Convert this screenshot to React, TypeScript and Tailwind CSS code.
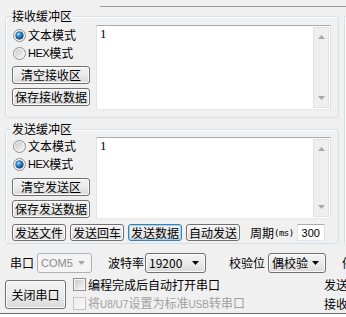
import React from 'react';

const Radio: React.FC<{ checked?: boolean; id: string }> = ({ checked, id }) => (
  <svg width="13" height="13" viewBox="0 0 13 13" className="shrink-0">
    <defs>
      <linearGradient id={`rb-${id}`} x1="0" y1="0" x2="1" y2="1">
        <stop offset="0" stopColor="#c9c9c9" />
        <stop offset="1" stopColor="#f8f8f8" />
      </linearGradient>
      <radialGradient id={`rd-${id}`} cx="0.35" cy="0.3" r="0.75">
        <stop offset="0" stopColor="#a9e0ff" />
        <stop offset="0.45" stopColor="#2b8bd6" />
        <stop offset="1" stopColor="#0b3f78" />
      </radialGradient>
    </defs>
    <circle cx="6.5" cy="6.5" r="6" fill="#f4f4f4" stroke="#8e8f8f" />
    <circle cx="6.5" cy="6.5" r="4.5" fill={`url(#rb-${id})`} />
    {checked && <circle cx="6.5" cy="6.5" r="3.8" fill={`url(#rd-${id})`} stroke="#14467a" strokeWidth="0.6" />}
  </svg>
);

const Check: React.FC<{ disabled?: boolean }> = ({ disabled }) => (
  <svg width="13" height="13" viewBox="0 0 13 13" className="shrink-0">
    <defs>
      <linearGradient id={disabled ? 'cbd' : 'cbe'} x1="0" y1="0" x2="1" y2="1">
        <stop offset="0" stopColor={disabled ? '#ececec' : '#cbcbcb'} />
        <stop offset="1" stopColor={disabled ? '#f8f8f8' : '#f6f6f6'} />
      </linearGradient>
    </defs>
    <rect x="0.5" y="0.5" width="12" height="12" fill="#f4f4f4" stroke={disabled ? '#c4c4c4' : '#8e8f8f'} />
    <rect x="2" y="2" width="9" height="9" fill={`url(#${disabled ? 'cbd' : 'cbe'})`} />
  </svg>
);

const Btn: React.FC<{ children: React.ReactNode; className?: string; focused?: boolean }> = ({
  children,
  className = '',
  focused = false,
}) => (
  <div
    className={`flex shrink-0 items-center justify-center rounded-[3px] border bg-gradient-to-b from-[#f3f3f3] via-[#ebebeb] to-[#d9d9d9] leading-[14px] ${
      focused
        ? 'border-[#3c7fb1] shadow-[inset_0_0_0_1px_#9fd4f3]'
        : 'border-[#707070] shadow-[inset_0_0_0_1px_#fbfbfb]'
    } ${className}`}
  >
    {children}
  </div>
);

const Combo: React.FC<{ text: string; className: string; disabled?: boolean }> = ({
  text,
  className,
  disabled,
}) => (
  <div
    className={`flex h-[20px] shrink-0 items-center justify-between rounded-[3px] border pl-[3px] pr-[6px] ${
      disabled
        ? 'border-[#adb2b5] bg-[#f4f4f4] text-[#8a8a8a]'
        : 'border-[#707070] bg-gradient-to-b from-[#f3f3f3] via-[#ebebeb] to-[#d9d9d9] shadow-[inset_0_0_0_1px_#fbfbfb]'
    } ${className}`}
  >
    <span className={disabled ? "font-['Liberation_Sans',sans-serif] text-[11px]" : ''}>{text}</span>
    <svg width="7" height="4" viewBox="0 0 7 4">
      <path d="M0 0h7L3.5 4z" fill={disabled ? '#a6a6a6' : '#000'} />
    </svg>
  </div>
);

const Memo: React.FC<{ className: string }> = ({ className }) => (
  <div className={`flex shrink-0 border border-[#abadb3] border-r-[#dbdfe6] border-b-[#e3e9ef] border-l-[#e2e3ea] bg-white ${className}`}>
    <div className="flex-1 pl-[3px] pt-[1px] font-['Liberation_Serif',serif] text-[13px] leading-[14px]">1</div>
    <div className="my-[1px] mr-[1px] flex w-[16px] flex-col items-center justify-between border border-[#e2e2e2] bg-[#efefef] py-[7px]">
      <svg width="7" height="4" viewBox="0 0 7 4">
        <path d="M0 4h7L3.5 0z" fill="#a8a8a8" />
      </svg>
      <svg width="7" height="4" viewBox="0 0 7 4">
        <path d="M0 0h7L3.5 4z" fill="#a8a8a8" />
      </svg>
    </div>
  </div>
);

const GroupBox: React.FC<{ label: string; className: string; children: React.ReactNode }> = ({
  label,
  className,
  children,
}) => (
  <div className={`relative rounded-[3px] border border-[#d5dfe5] shadow-[inset_1px_1px_0_#ffffff] ${className}`}>
    <span className="absolute -top-[8px] left-[5px] bg-[#f0f0f0] px-[1px] leading-[14px]">{label}</span>
    {children}
  </div>
);

const App: React.FC = () => {
  return (
    <div className="flex h-[317px] w-[346px] flex-col overflow-hidden bg-[#f0f0f0] font-['Noto_Sans_CJK_SC',sans-serif] text-[12px] leading-[14px] text-black">
      <div className="h-[16px] shrink-0">
        <div className="h-[6px]" />
        <div className="ml-[100px] h-px bg-[#9a9a9a]" />
      </div>

      <div className="flex h-[228px] shrink-0">
        <div className="ml-[5px] flex w-[334px] shrink-0 flex-col">
          <GroupBox label="接收缓冲区" className="h-[102px] px-[6px] pt-[8px] pb-[7px]">
            <div className="flex h-[85px]">
              <div className="flex w-[78px] shrink-0 flex-col">
                <div className="mt-[1px] flex h-[18px] items-center gap-[2px] pl-[1px]">
                  <Radio checked id="r1" />
                  <span>文本模式</span>
                </div>
                <div className="flex h-[18px] items-center gap-[2px] pl-[1px]">
                  <Radio id="r2" />
                  <span className="font-['Liberation_Sans',sans-serif] text-[11px] tracking-[-0.5px]">HEX</span>
                  <span className="-ml-[2px]">模式</span>
                </div>
                <Btn className="mt-[4px] h-[18px]">清空接收区</Btn>
                <Btn className="mt-[4px] h-[18px]">保存接收数据</Btn>
              </div>
              <Memo className="ml-[6px] h-[85px] w-[235px]" />
            </div>
          </GroupBox>

          <GroupBox label="发送缓冲区" className="mt-[11px] h-[115px] px-[6px] pt-[7px] pb-[2px]">
            <div className="flex h-[82px]">
              <div className="flex w-[78px] shrink-0 flex-col">
                <div className="flex h-[18px] items-center gap-[2px] pl-[1px]">
                  <Radio id="r3" />
                  <span>文本模式</span>
                </div>
                <div className="flex h-[18px] items-center gap-[2px] pl-[1px]">
                  <Radio checked id="r4" />
                  <span className="font-['Liberation_Sans',sans-serif] text-[11px] tracking-[-0.5px]">HEX</span>
                  <span className="-ml-[2px]">模式</span>
                </div>
                <Btn className="mt-[5px] h-[18px]">清空发送区</Btn>
                <Btn className="mt-[4px] h-[18px]">保存发送数据</Btn>
              </div>
              <Memo className="ml-[6px] h-[82px] w-[235px]" />
            </div>
            <div className="mt-[5px] flex h-[17px] items-center whitespace-nowrap">
              <Btn className="h-[17px] w-[54px]">发送文件</Btn>
              <Btn className="ml-[4px] h-[17px] w-[54px]">发送回车</Btn>
              <Btn focused className="ml-[4px] h-[17px] w-[54px]">发送数据</Btn>
              <Btn className="ml-[4px] h-[17px] w-[54px]">自动发送</Btn>
              <span className="ml-[10px]">周期</span>
              <span className="font-['DejaVu_Sans_Mono',monospace] text-[9px] tracking-[-0.5px]">(ms)</span>
              <div className="ml-[3px] flex h-[17px] w-[28px] shrink-0 items-center justify-center border border-[#abadb3] border-r-[#dbdfe6] border-b-[#e3e9ef] border-l-[#e2e3ea] bg-white font-['Liberation_Sans',sans-serif] text-[11px]">
                300
              </div>
            </div>
          </GroupBox>
        </div>
        <div className="ml-[5px] h-[228px] flex-1 rounded-tl-[3px] border-t border-l border-[#d5dfe5] shadow-[inset_1px_1px_0_#ffffff]" />
      </div>

      <div className="mt-[9px] flex h-[20px] shrink-0 items-center whitespace-nowrap pl-[10px]">
        <span className="shrink-0">串口</span>
        <Combo disabled text="COM5" className="ml-[3px] w-[55px]" />
        <span className="ml-[16px] shrink-0">波特率</span>
        <Combo text="19200" className="ml-[1px] w-[61px]" />
        <span className="ml-[23px] shrink-0">校验位</span>
        <Combo text="偶校验" className="ml-[3px] w-[58px]" />
        <span className="ml-[16px] shrink-0">停止位</span>
      </div>

      <div className="mt-[2px] flex h-[38px] shrink-0 whitespace-nowrap">
        <Btn className="mt-[5px] ml-[5px] h-[29px] w-[61px] text-[12px]">关闭串口</Btn>
        <div className="ml-[7px] flex w-[251px] shrink-0 flex-col">
          <div className="flex h-[19px] items-center gap-[2px]">
            <Check />
            <span>编程完成后自动打开串口</span>
          </div>
          <div className="flex h-[19px] items-center gap-[2px] text-[#a0a0a0]">
            <Check disabled />
            <span>
              将<span className="font-['Liberation_Sans',sans-serif] text-[10px]">U8/U7</span>设置为标准
              <span className="font-['Liberation_Sans',sans-serif] text-[10px]">USB</span>转串口
            </span>
          </div>
        </div>
        <div className="flex shrink-0 flex-col">
          <div className="flex h-[19px] items-center">发送字节</div>
          <div className="flex h-[19px] items-center">接收字节</div>
        </div>
      </div>

      <div className="h-px shrink-0 bg-[#6e6e6e]" />
      <div className="flex-1 bg-white" />
    </div>
  );
};

export default App;
